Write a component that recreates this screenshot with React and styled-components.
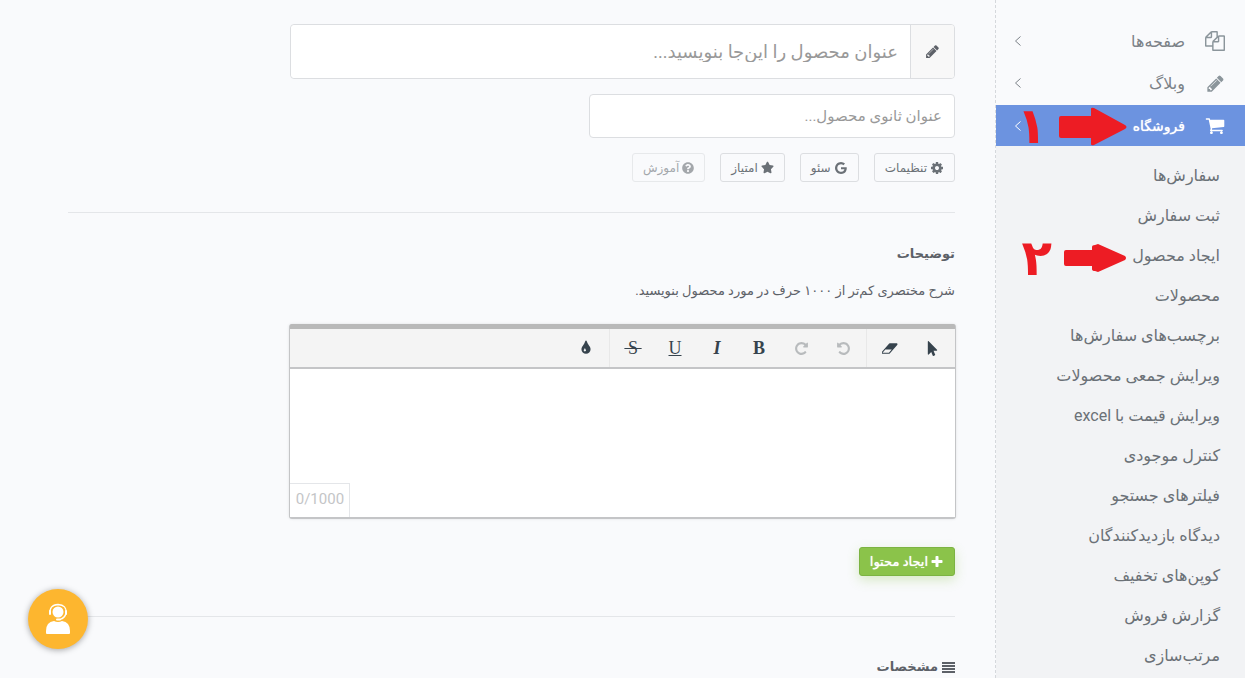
// App.jsx

// Modules
import styled, { createGlobalStyle, css } from 'styled-components';
import { FaStar, FaQuestionCircle, FaMousePointer } from 'react-icons/fa';

const paths = {
  files: 'M1696 384q40 0 68 28t28 68v1216q0 40-28 68t-68 28h-960q-40 0-68-28t-28-68v-288h-544q-40 0-68-28t-28-68v-672q0-40 20-88t48-76l408-408q28-28 76-48t88-20h416q40 0 68 28t28 68v328q68-40 128-40h416zm-544 213l-299 299h299v-299zm-640-384l-299 299h299v-299zm196 647l316-316v-416h-384v416q0 40-28 68t-68 28h-416v640h512v-256q0-40 20-88t48-76zm956 804v-1152h-384v416q0 40-28 68t-68 28h-416v640h896z',
  pencil: 'M491 1536l91-91-235-235-91 91v107h128v128h107zM1014 608q0-22-22-22-10 0-17 7l-542 542q-7 7-7 17 0 22 22 22 10 0 17-7l542-542q7-7 7-17zM960 416l416 416-832 832h-416v-416zM1643 512q0 53-37 90l-166 166-416-416 166-165q36-38 90-38 53 0 91 38l235 234q37 39 37 91z',
  cart: 'M704 1536q0 52-38 90t-90 38-90-38-38-90 38-90 90-38 90 38 38 90zm896 0q0 52-38 90t-90 38-90-38-38-90 38-90 90-38 90 38 38 90zm128-1088v512q0 24-16.5 42.5t-40.5 21.5l-1044 122q13 60 13 70 0 16-24 64h920q26 0 45 19t19 45-19 45-45 19h-1024q-26 0-45-19t-19-45q0-11 8-31.5t16-36 21.5-40 15.5-29.5l-177-823h-204q-26 0-45-19t-19-45 19-45 45-19h256q16 0 28.5 6.5t19.5 15.5 13 24.5 8 26 5.5 29.5 4.5 26h1201q26 0 45 19t19 45z',
  cog: 'M1152 896q0-106-75-181t-181-75-181 75-75 181 75 181 181 75 181-75 75-181zm512-109v222q0 12-8 23t-20 13l-185 28q-19 54-39 91 35 50 107 138 10 12 10 25t-9 23q-27 37-99 108t-94 71q-12 0-26-9l-138-108q-44 23-91 38-16 136-29 186-7 28-36 28h-222q-14 0-24.5-8.5t-11.5-21.5l-28-184q-49-16-90-37l-141 107q-10 9-25 9-14 0-25-11-126-114-165-168-7-10-7-23 0-12 8-23 15-21 51-66.5t54-70.5q-27-50-41-99l-183-27q-13-2-21-12.5t-8-23.5v-222q0-12 8-23t19-13l186-28q14-46 39-92-40-57-107-138-10-12-10-24 0-10 9-23 26-36 98.5-107.5t94.5-71.5q13 0 26 10l138 107q44-23 91-38 16-136 29-186 7-28 36-28h222q14 0 24.5 8.5t11.5 21.5l28 184q49 16 90 37l142-107q9-9 24-9 13 0 25 10 129 119 165 170 7 8 7 22 0 12-8 23-15 21-51 66.5t-54 70.5q26 50 41 98l183 28q13 2 21 12.5t8 23.5z',
  google: 'M896 786h725q12 67 12 128 0 217-91 387.5t-259.5 266.5-386.5 96q-157 0-299-60.5t-245-163.5-163.5-245-60.5-299 60.5-299 163.5-245 245-163.5 299-60.5q300 0 515 201l-209 201q-123-119-306-119-129 0-238.5 65t-173.5 176.5-64 243.5 64 243.5 173.5 176.5 238.5 65q87 0 160-24t120-60 82-82 51.5-87 22.5-78h-436v-264z',
  plus: 'M1600 736v192q0 40-28 68t-68 28h-416v416q0 40-28 68t-68 28h-192q-40 0-68-28t-28-68v-416h-416q-40 0-68-28t-28-68v-192q0-40 28-68t68-28h416v-416q0-40 28-68t68-28h192q40 0 68 28t28 68v416h416q40 0 68 28t28 68z',
  undo: 'M1664 896q0 156-61 298t-164 245-245 164-298 61q-172 0-327-72.5t-264-204.5q-7-10-6.5-22.5t8.5-20.5l137-138q10-9 25-9 16 2 23 12 73 95 179 147t225 52q104 0 198.5-40.5t163.5-109.5 109.5-163.5 40.5-198.5-40.5-198.5-109.5-163.5-163.5-109.5-198.5-40.5q-98 0-188 35.5t-160 101.5l137 138q31 30 14 69-17 40-59 40h-448q-26 0-45-19t-19-45v-448q0-42 40-59 39-17 69 14l130 129q107-101 244.5-156.5t284.5-55.5q156 0 298 61t245 164 164 245 61 298z',
  eraser: 'M832 1408l336-384h-768l-336 384h768zm1013-1077q15 34 9.5 71.5t-30.5 65.5l-896 1024q-38 44-96 44h-768q-38 0-69.5-20.5t-47.5-54.5q-15-34-9.5-71.5t30.5-65.5l896-1024q38-44 96-44h768q38 0 69.5 20.5t47.5 54.5z',
  tint: 'M896 1152q0-36-20-69-1-1-15.5-22.5t-25.5-38-25-44-21-50.5q-4-16-21-16t-21 16q-7 23-21 50.5t-25 44-25.5 38-15.5 22.5q-20 33-20 69 0 53 37.5 90.5t90.5 37.5 90.5-37.5 37.5-90.5zm512-128q0 212-150 362t-362 150-362-150-150-362q0-145 81-275 6-9 62.5-90.5t101-151 99.5-178 83-201.5q9-30 34-47t51-17 51.5 17 33.5 47q28 93 83 201.5t99.5 178 101 151 62.5 90.5q81 127 81 275z'
};

const Icon = ({ name, size = 14, flip }) => (
  <svg width={size} height={size} viewBox='0 0 1792 1792' fill='currentColor' aria-hidden='true'>
    <path d={paths[name]} transform={flip ? 'translate(1792 0) scale(-1 1)' : undefined} />
  </svg>
);

const Chevron = () => (
  <svg width='8' height='12' viewBox='0 0 8 12' fill='none' stroke='currentColor' aria-hidden='true'>
    <path d='M6.5 1.5L1.5 6l5 4.5' />
  </svg>
);

const menu = [
  { label: 'صفحه‌ها', icon: 'files', size: 20 },
  { label: 'وبلاگ', icon: 'pencil', size: 19 },
  { label: 'فروشگاه', icon: 'cart', size: 21, active: true, mark: '۱' }
];

const submenu = [
  'سفارش‌ها',
  'ثبت سفارش',
  'ایجاد محصول',
  'محصولات',
  'برچسب‌های سفارش‌ها',
  'ویرایش جمعی محصولات',
  'ویرایش قیمت با excel',
  'کنترل موجودی',
  'فیلترهای جستجو',
  'دیدگاه بازدیدکنندگان',
  'کوپن‌های تخفیف',
  'گزارش فروش',
  'مرتب‌سازی'
];

const Sidebar = () => (
  <Side>
    {menu.map(({ label, icon, size, active, mark }) =>
      <MenuLink key={label} href='#' $active={active}>
        <MenuIcon $active={active}><Icon name={icon} size={size} /></MenuIcon>
        <span>{label}</span>
        <Chevron />
        {mark &&
          <Mark>
            <svg width='68' height='40' viewBox='0 0 68 40' fill='#ed1c24' aria-hidden='true'>
              <path d='M2 10H32V3Q32 1 35 2L66 19Q69 21 66 23L35 39Q32 40 32 38V32H2Q0 32 0 30V12Q0 10 2 10Z' />
            </svg>
            <Digit>{mark}</Digit>
          </Mark>
        }
      </MenuLink>
    )}
    <Sub>
      {submenu.map((label, i) =>
        <SubLink key={label} href='#'>
          {label}
          {i === 2 &&
            <Mark $top={4}>
              <svg width='63' height='28' viewBox='0 0 63 28' fill='#ed1c24' aria-hidden='true'>
                <path d='M2 6H28V3Q28 1 31 1L34 0L61 12Q63 14 61 16L34 28L31 27Q28 27 28 25V22H2Q0 22 0 20V8Q0 6 2 6Z' />
              </svg>
              <Digit>۲</Digit>
            </Mark>
          }
        </SubLink>
      )}
    </Sub>
  </Side>
);

const App = () => (
  <>
    <GlobalStyle />
    <Page dir='rtl' lang='fa'>
      <Sidebar />
      <Main>
        <TitleGroup>
          <Addon htmlFor='title' aria-label='عنوان محصول'><Icon name='pencil' size={15} /></Addon>
          <TitleInput id='title' placeholder='عنوان محصول را این‌جا بنویسید...' />
        </TitleGroup>
        <SubtitleInput aria-label='عنوان ثانوی محصول' placeholder='عنوان ثانوی محصول...' />
        <Actions>
          <Button><Icon name='cog' />تنظیمات</Button>
          <Button><Icon name='google' />سئو</Button>
          <Button><FaStar size={13} />امتیاز</Button>
          <Button $muted><FaQuestionCircle size={12} />آموزش</Button>
        </Actions>
        <Rule />
        <Heading>توضیحات</Heading>
        <Hint>شرح مختصری کم‌تر از ۱۰۰۰ حرف در مورد محصول بنویسید.</Hint>
        <Editor>
          <Toolbar>
            <Group>
              <Tool aria-label='انتخاب'><FaMousePointer size={15} /></Tool>
              <Tool aria-label='پاک کردن'>
                <svg width='16' height='15' viewBox='0 0 1920 1792' fill='currentColor' aria-hidden='true'>
                  <path d={paths.eraser} />
                </svg>
              </Tool>
            </Group>
            <Group>
              <Tool $off aria-label='واگرد'><Icon name='undo' size={15} /></Tool>
              <Tool $off aria-label='ازنو'><Icon name='undo' size={15} flip /></Tool>
              <Tool>B</Tool>
              <Tool $italic>I</Tool>
              <Tool $line='underline' $light>U</Tool>
              <Tool $line='line-through' $light>{'\u2009S\u2009'}</Tool>
            </Group>
            <Group>
              <Tool aria-label='رنگ'><Icon name='tint' size={16} /></Tool>
            </Group>
          </Toolbar>
          <Content aria-label='توضیحات' />
          <Counter>0/1000</Counter>
        </Editor>
        <AddButton><Icon name='plus' />ایجاد محتوا</AddButton>
        <Rule />
        <Heading $lower>
          <svg width='13' height='11' viewBox='0 0 13 11' fill='currentColor' aria-hidden='true'>
            <path d='M0 0h13v2H0zM0 3h13v2H0zM0 6h13v2H0zM0 9h13v2H0z' />
          </svg>
          مشخصات
        </Heading>
      </Main>
      <Support aria-label='پشتیبانی'>
        <svg width='26' height='32' viewBox='0 0 26 32' fill='none' stroke='#fff' aria-hidden='true'>
          <circle cx='13' cy='9' r='5.5' fill='#fff' stroke='none' />
          <path d='M5 11Q4 2 13 1.5Q22 2 21 10Q20 15 15 16.5' strokeWidth='1.3' />
          <path d='M5 8v3M21 8v3M12 16.5h3' strokeWidth='2' strokeLinecap='round' />
          <path d='M1 30v-2q0-9 8-10q4 2 8 0q8 1 8 10v2q0 1-1 1H2q-1 0-1-1z' fill='#fff' stroke='none' />
        </svg>
      </Support>
    </Page>
  </>
);

// Styled components
const GlobalStyle = createGlobalStyle`
  *, *::before, *::after {
    box-sizing: border-box;
  }
  body {
    background: #f9fafc;
    margin: 0;
    overflow: hidden;
  }
  body, button, input, textarea {
    font-family: Roboto, 'DejaVu Sans', sans-serif;
  }
`;

const Page = styled.div`
  color: #5d6168;
  display: flex;
  height: 100vh;
  overflow: hidden;
`;

const Side = styled.nav`
  border-left: 1px dashed #d5d8dc;
  display: flex;
  flex: 0 0 250px;
  flex-direction: column;
  padding-top: 20px;
`;

const MenuLink = styled.a`
  align-items: center;
  background: ${p => p.$active ? '#6c93e0' : 'transparent'};
  color: ${p => p.$active ? '#fff' : '#7c8288'};
  display: flex;
  flex: 0 0 ${p => p.$active ? 41 : 42}px;
  font-size: ${p => p.$active ? 14 : 16}px;
  margin-top: ${p => p.$active ? 1 : 0}px;
  padding: 0 20px 0 18px;
  position: relative;
  text-decoration: none;
  text-shadow: ${p => p.$active ? '0 0 1px #fff' : 'none'};
  > svg {
    margin-right: auto;
  }
`;

const MenuIcon = styled.i`
  color: ${p => p.$active ? '#fff' : '#8b959b'};
  display: flex;
  justify-content: center;
  margin-left: 20px;
  width: 20px;
`;

const Sub = styled.div`
  background: #f2f3f5;
  flex: 1 0 auto;
  padding-top: 10px;
`;

const SubLink = styled.a`
  color: #6b7177;
  display: block;
  font-size: 16px;
  height: 40px;
  line-height: 40px;
  padding-right: 25px;
  position: relative;
  text-decoration: none;
`;

// step marks drawn over the menu
const Mark = styled.span`
  align-items: center;
  bottom: 0;
  display: flex;
  position: absolute;
  right: 118px;
  text-shadow: none;
  top: ${p => p.$top || 0}px;
`;

const Digit = styled.b`
  color: #ed1c24;
  font-size: 50px;
  line-height: 40px;
  margin-right: 12px;
`;

const Main = styled.main`
  align-items: flex-start;
  display: flex;
  flex: 1;
  flex-direction: column;
  padding: 24px 40px 0 68px;
`;

const field = css`
  background: #fff;
  border: 1px solid #dcdee1;
  border-radius: 4px;
  color: #5d6168;
  outline: none;
  &::placeholder {
    color: #999;
    opacity: 1;
  }
`;

const TitleGroup = styled.div`
  ${field}
  display: flex;
  flex-shrink: 0;
  height: 55px;
  overflow: hidden;
  width: 75%;
`;

const Addon = styled.label`
  align-items: center;
  background: #f8f8f8;
  border-left: 1px solid #dcdee1;
  display: flex;
  flex: 0 0 44px;
  justify-content: center;
`;

const TitleInput = styled.input`
  ${field}
  border: 0;
  flex: 1;
  font-size: 18px;
  padding: 0 12px;
`;

const SubtitleInput = styled.input`
  ${field}
  flex-shrink: 0;
  font-size: 15px;
  height: 44px;
  margin-top: 15px;
  padding: 0 12px;
  width: 366px;
`;

const Actions = styled.div`
  display: flex;
  gap: 15px;
  margin-top: 15px;
`;

const Button = styled.button`
  align-items: center;
  background: transparent;
  border: 1px solid #dcdee1;
  border-radius: 3px;
  color: #6b7177;
  display: flex;
  font-size: 12px;
  gap: 3px;
  height: 29px;
  opacity: ${p => p.$muted ? 0.6 : 1};
  padding: 0 10px;
`;

const Rule = styled.hr`
  border: 0;
  border-top: 1px solid #e4e6e9;
  flex-shrink: 0;
  margin: 30px 0;
  width: 100%;
`;

const Heading = styled.h2`
  align-items: center;
  display: flex;
  font-size: 13px;
  gap: 4px;
  line-height: 22px;
  margin: ${p => p.$lower ? 9 : 0}px 0 0;
`;

const Hint = styled.p`
  font-size: 13px;
  line-height: 24px;
  margin: 14px 0 21px;
`;

const Editor = styled.section`
  background: #fff;
  border-radius: 2px;
  border-top: 5px solid #b9b9b9;
  box-shadow: 0 1px 0 1px #c4c5c7, 0 1px 3px 1px rgba(0, 0, 0, .1);
  flex-shrink: 0;
  position: relative;
  width: 75%;
`;

const Toolbar = styled.div`
  background: #f4f4f4;
  border-bottom: 2px solid #c4c5c7;
  display: flex;
  padding-right: 2px;
`;

const Group = styled.div`
  display: flex;
  padding: 0 0 0 2px;
  & + & {
    border-right: 1px solid #e8e8e8;
    padding-right: 2px;
  }
`;

const Tool = styled.button`
  align-items: center;
  background: transparent;
  border: 0;
  color: ${p => p.$off ? '#b8bbbd' : '#36434d'};
  display: flex;
  font: ${p => p.$italic ? 'italic' : 'normal'} ${p => p.$light ? 'normal' : 'bold'} 18px 'Liberation Serif', serif;
  height: 38px;
  justify-content: center;
  padding: 0;
  text-decoration: ${p => p.$line || 'none'};
  white-space: pre;
  width: 42px;
`;

const Content = styled.textarea`
  border: 0;
  display: block;
  height: 148px;
  outline: none;
  resize: none;
  width: 100%;
`;

const Counter = styled.span`
  border: 1px solid #e4e6e9;
  border-width: 1px 1px 0 0;
  bottom: 0;
  color: #c4c5c7;
  direction: ltr;
  font-size: 15px;
  left: 0;
  line-height: 30px;
  padding: 0 5px 3px 6px;
  position: absolute;
`;

const AddButton = styled(Button)`
  background: #8bc34a;
  border-color: #7cb342;
  box-shadow: 0 4px 12px rgba(139, 195, 74, .3);
  color: #fff;
  flex-shrink: 0;
  font-size: 13px;
  gap: 2px;
  margin: 30px 0 10px;
  text-shadow: 0 0 1px #fff;
`;

const Support = styled.button`
  align-items: center;
  background: #fdb62f;
  border: 0;
  border-radius: 50%;
  bottom: 29px;
  box-shadow: 0 1px 6px rgba(0, 0, 0, .35);
  display: flex;
  height: 60px;
  justify-content: center;
  left: 28px;
  padding: 0;
  position: fixed;
  width: 60px;
`;

export default App;
